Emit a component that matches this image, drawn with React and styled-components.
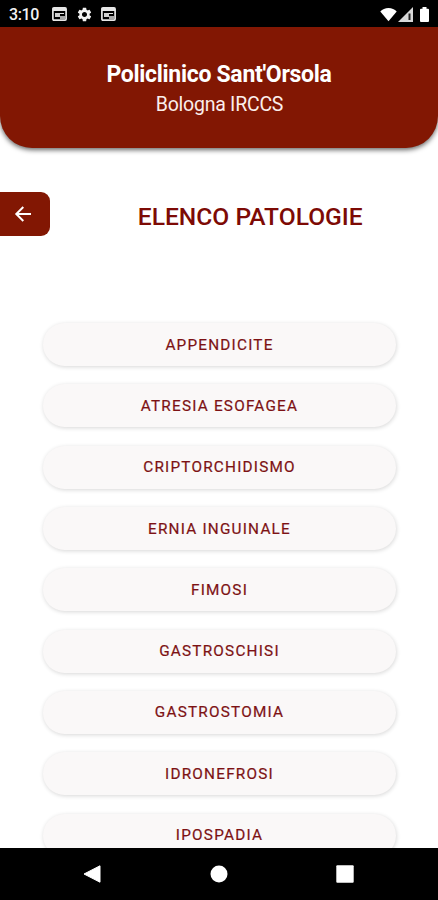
import React from 'react'
import styled, { createGlobalStyle } from 'styled-components'
import { MdSettings } from 'react-icons/md'

const GlobalStyle = createGlobalStyle`
    * {
        box-sizing: border-box;
    }

    body {
        margin: 0;
        background: #fff;
        font-family: Roboto, sans-serif;
    }
`;

const Screen = styled.div`
    display: flex;
    flex-direction: column;
    width: 100%;
    height: 100vh;
    overflow: hidden;
    background: #fff;
`;

const StatusBar = styled.div`
    flex: none;
    display: flex;
    align-items: center;
    justify-content: space-between;
    height: 27px;
    padding: 1px 9px 0 9px;
    background: #000;
    color: #f2f2f2;
`;

const StatusGroup = styled.div`
    display: flex;
    align-items: center;
    gap: ${({gap}) => gap};

    svg {
        display: block;
    }

    svg:nth-child(3) {
        margin-left: ${({lastGap}) => lastGap || '0'};
    }
`;

const Time = styled.span`
    width: 34.5px;
    padding-top: 1px;
    font-size: 16px;
    font-weight: 500;
    line-height: 20px;
    letter-spacing: -0.4px;
`;

const Header = styled.header`
    flex: none;
    height: 121px;
    padding-top: 34px;
    background: #821703;
    border-radius: 0 0 32px 32px;
    box-shadow: 0 2px 5px rgba(0, 0, 0, 0.6);
    color: #fff;
    text-align: center;
`;

const HospitalName = styled.h1`
    margin: 0;
    font-size: 23px;
    font-weight: 700;
    line-height: 28px;
    letter-spacing: -0.3px;
`;

const HospitalCity = styled.p`
    margin: 2.5px 0 0 1px;
    font-size: 19.5px;
    line-height: 26px;
    letter-spacing: -0.25px;
    color: #fbeeeb;
`;

const TitleRow = styled.div`
    flex: none;
    display: flex;
    align-items: center;
    height: 44px;
    margin-top: 44.4px;
`;

const BackButton = styled.button`
    display: flex;
    align-items: center;
    width: 50.4px;
    height: 44px;
    padding: 0 0 0 14px;
    border: none;
    border-radius: 0 9px 9px 0;
    background: #821703;
    color: #fff;
    cursor: pointer;
`;

const Title = styled.h2`
    margin: 5px 0 0 87.4px;
    font-size: 24.6px;
    font-weight: 500;
    line-height: 30px;
    color: #7d0a05;
    white-space: nowrap;
`;

const List = styled.div`
    flex: 1;
    min-height: 0;
    display: flex;
    flex-direction: column;
    gap: 18.3px;
    padding: 86.8px 42px 0 43px;
    overflow: hidden;
`;

const ListButton = styled.button`
    flex: none;
    height: 43px;
    padding: 0;
    border: none;
    border-radius: 22px;
    background: #faf8f8;
    box-shadow: 0.5px 1px 4px rgba(0, 0, 0, 0.16);
    color: #7d1214;
    font-family: inherit;
    font-size: 15.3px;
    font-weight: 400;
    line-height: 20px;
    letter-spacing: 1.22px;
    -webkit-text-stroke: 0.2px #7d1214;
    cursor: pointer;
`;

const NavBar = styled.nav`
    flex: none;
    display: flex;
    align-items: center;
    justify-content: space-between;
    height: 52.5px;
    padding: 0 84px 0 83px;
    background: #000;

    svg {
        display: block;
    }
`;

const pathologies = [
    'APPENDICITE',
    'ATRESIA ESOFAGEA',
    'CRIPTORCHIDISMO',
    'ERNIA INGUINALE',
    'FIMOSI',
    'GASTROSCHISI',
    'GASTROSTOMIA',
    'IDRONEFROSI',
    'IPOSPADIA',
]

const CardIcon = () => (
    <svg width="15" height="14" viewBox="0 0 15 14">
        <rect x="0.9" y="0.9" width="13.2" height="12.2" rx="1" fill="none" stroke="#e6e6e6" strokeWidth="1.7" />
        <path d="M1 1h13v3H1z" fill="#e6e6e6" />
        <path d="M3 6h5v4H3z" fill="#d0d0d0" />
        <path d="M8 6.500h4" stroke="#e6e6e6" />
        <path d="M8 9h5v4H8z" fill="#a8a8a8" />
    </svg>
)

const ArrowIcon = () => (
    <svg width="18" height="18" viewBox="0 0 18 18" fill="none" stroke="#fff" strokeWidth="2">
        <path d="M17 9H2.500M9.300 2 2.300 9l7 7" />
    </svg>
)

const WifiIcon = () => (
    <svg width="17" height="15" viewBox="0 0 18 15">
        <path d="M9 14.700 0.300 4.200C2.600 2 5.500 0.700 9 0.700s6.400 1.300 8.700 3.500z" fill="#fff" />
    </svg>
)

const SignalIcon = () => (
    <svg width="15" height="15" viewBox="0 0 15 15">
        <path d="M0 15 15 0v15z" fill="#d8d8d8" />
        <path d="M10.500 6.500h2V13h-2z" fill="#222" />
    </svg>
)

const BatteryIcon = () => (
    <svg width="9" height="15" viewBox="0 0 9 15">
        <path d="M2.500 0h4v1.800H8a1 1 0 0 1 1 1V14a1 1 0 0 1-1 1H1a1 1 0 0 1-1-1V2.800a1 1 0 0 1 1-1h1.500z" fill="#fff" />
    </svg>
)

const App = () => {
    return (
        <>
            <GlobalStyle />
            <Screen>
                <StatusBar>
                    <StatusGroup gap="8.5px">
                        <Time>3:10</Time>
                        <CardIcon />
                        <MdSettings size={17} />
                        <CardIcon />
                    </StatusGroup>
                    <StatusGroup gap="1px" lastGap="6px">
                        <WifiIcon />
                        <SignalIcon />
                        <BatteryIcon />
                    </StatusGroup>
                </StatusBar>
                <Header>
                    <HospitalName>Policlinico Sant'Orsola</HospitalName>
                    <HospitalCity>Bologna IRCCS</HospitalCity>
                </Header>
                <TitleRow>
                    <BackButton aria-label="Indietro">
                        <ArrowIcon />
                    </BackButton>
                    <Title>ELENCO PATOLOGIE</Title>
                </TitleRow>
                <List>
                    {pathologies.map((name) => (
                        <ListButton key={name}>{name}</ListButton>
                    ))}
                </List>
                <NavBar>
                    <svg width="18" height="18" viewBox="0 0 18 18">
                        <path d="M1 9 17 0.800v16.400z" fill="#fff" stroke="#fff" strokeLinejoin="round" />
                    </svg>
                    <svg width="18" height="18" viewBox="0 0 18 18">
                        <circle cx="9" cy="9" r="8.5" fill="#fff" />
                    </svg>
                    <svg width="18" height="18" viewBox="0 0 18 18">
                        <rect x="0.3" y="0.3" width="17.4" height="17.4" rx="1" fill="#fff" />
                    </svg>
                </NavBar>
            </Screen>
        </>
    )
}

export default App
